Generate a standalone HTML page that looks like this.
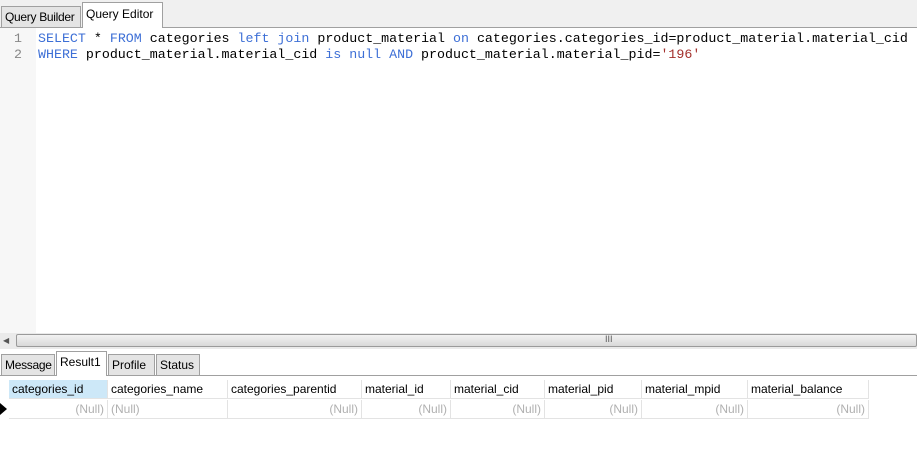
<!DOCTYPE html><html><head><style>
body{margin:0;width:917px;height:455px;background:#fff;font-family:"Liberation Sans",sans-serif;font-size:12px;position:relative;overflow:hidden}
.a{position:absolute}
.tab{position:absolute;border:1px solid #a0a0a0;border-bottom:none;background:#e4e4e4;color:#000;padding:0 3px;box-sizing:border-box;line-height:20px;white-space:nowrap;overflow:hidden}
.code{position:absolute;font-family:"Liberation Mono",monospace;font-size:13.3px;white-space:pre;color:#000;line-height:16px}
.k{color:#3d6fd6}.s{color:#a3302c}
.hd,.cl{position:absolute;height:19px;line-height:19px;box-sizing:border-box;border-right:1px solid #e3e3e3;border-bottom:1px solid #e3e3e3;padding:0 3px;white-space:nowrap}
.cl{color:#b0b0b0;text-align:right}
</style></head><body>
<div class="a" style="left:0;top:0;width:917px;height:27px;background:#f0f0f0;border-bottom:1px solid #a0a0a0"></div>
<div class="tab" style="left:1px;top:6px;width:80px;height:21px;letter-spacing:-0.3px">Query Builder</div>
<div class="tab" style="left:82px;top:2px;width:81px;height:26px;background:#fff;line-height:22px">Query Editor</div>
<div class="a" style="left:0;top:28px;width:36px;height:305px;background:#f7f7f7"></div>
<div class="code" style="left:14px;top:31px;color:#888">1
2</div>
<div class="code" style="left:38px;top:31px"><span class="k">SELECT</span> * <span class="k">FROM</span> categories <span class="k">left join</span> product_material <span class="k">on</span> categories.categories_id=product_material.material_cid
<span class="k">WHERE</span> product_material.material_cid <span class="k">is null AND</span> product_material.material_pid=<span class="s">'196'</span></div>
<div class="a" style="left:0;top:333px;width:917px;height:16px;background:#eaeaea"></div>
<div class="a" style="left:3px;top:336px;font-size:8px;color:#555">◀</div>
<div class="a" style="left:16px;top:334px;width:901px;height:13px;border:1px solid #9a9a9a;border-radius:2px;background:linear-gradient(#f2f2f2,#d8d8d8);box-sizing:border-box"></div>
<div class="a" style="left:605px;top:334px;font-size:9px;color:#555">III</div>
<div class="a" style="left:0;top:375px;width:917px;height:1px;background:#a0a0a0"></div>
<div class="tab" style="left:1px;top:354px;width:54px;height:21px;letter-spacing:-0.3px">Message</div>
<div class="tab" style="left:56px;top:351px;width:51px;height:25px;background:#fff;line-height:20px">Result1</div>
<div class="tab" style="left:108px;top:354px;width:47px;height:21px">Profile</div>
<div class="tab" style="left:156px;top:354px;width:44px;height:21px">Status</div>
<div class="hd" style="left:9px;top:380px;width:99px;background:#cde8f8">categories_id</div>
<div class="hd" style="left:108px;top:380px;width:120px">categories_name</div>
<div class="hd" style="left:228px;top:380px;width:134px">categories_parentid</div>
<div class="hd" style="left:362px;top:380px;width:89px">material_id</div>
<div class="hd" style="left:451px;top:380px;width:94px">material_cid</div>
<div class="hd" style="left:545px;top:380px;width:97px">material_pid</div>
<div class="hd" style="left:642px;top:380px;width:106px">material_mpid</div>
<div class="hd" style="left:748px;top:380px;width:121px">material_balance</div>
<div class="cl" style="left:9px;top:400px;width:99px">(Null)</div>
<div class="cl" style="left:108px;top:400px;width:120px;text-align:left">(Null)</div>
<div class="cl" style="left:228px;top:400px;width:134px">(Null)</div>
<div class="cl" style="left:362px;top:400px;width:89px">(Null)</div>
<div class="cl" style="left:451px;top:400px;width:94px">(Null)</div>
<div class="cl" style="left:545px;top:400px;width:97px">(Null)</div>
<div class="cl" style="left:642px;top:400px;width:106px">(Null)</div>
<div class="cl" style="left:748px;top:400px;width:121px">(Null)</div>
<div class="a" style="left:0;top:403px;width:0;height:0;border-top:6px solid transparent;border-bottom:6px solid transparent;border-left:7px solid #000"></div>
</body></html>
